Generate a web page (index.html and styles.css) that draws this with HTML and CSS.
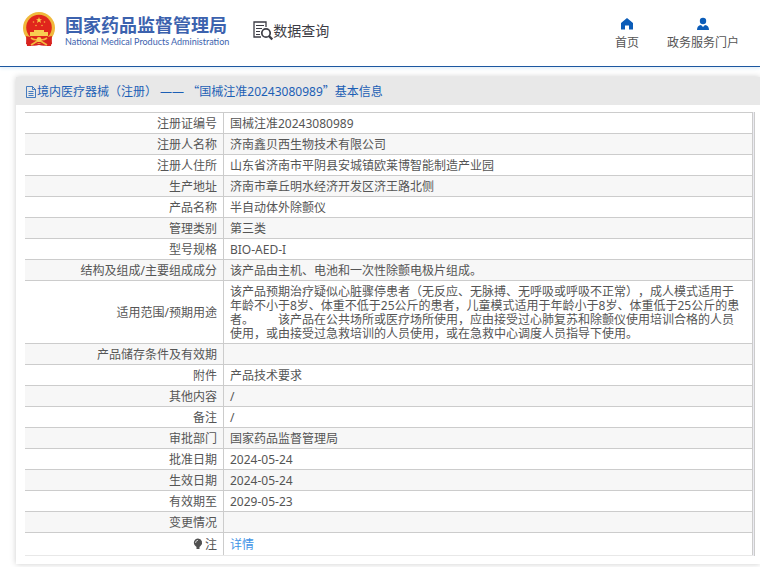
FILE: index.html
```html
<!DOCTYPE html>
<html lang="zh-CN">
<head>
    <meta charset="UTF-8">
    <meta name="viewport" content="width=device-width, initial-scale=1.0">
    <title>国家药品监督管理局 数据查询</title>
    <link rel="stylesheet" href="styles.css">
</head>
<body>
    <header class="header">
        <a class="logo" href="#">
            <svg class="emblem" viewBox="0 0 32 34" aria-hidden="true">
                <path d="M4 22 H28 L29 32 Q22 35 16 33 Q10 35 3 32 Z" fill="#d8231f"/>
                <circle cx="16" cy="16" r="16" fill="#f0b93c"/>
                <circle cx="16" cy="15.5" r="12.8" fill="#e0251c"/>
                <path d="M16 5 L16.8 7.2 L19 7.2 L17.3 8.6 L18 11 L16 9.5 L14 11 L14.7 8.6 L13 7.2 L15.2 7.2 Z" fill="#f9d24a"/>
                <g fill="#f9b03f">
                    <circle cx="10.5" cy="10" r="0.8"/>
                    <circle cx="21.5" cy="10" r="0.8"/>
                    <circle cx="13" cy="13.5" r="0.8"/>
                    <circle cx="19" cy="13.5" r="0.8"/>
                </g>
                <path d="M11 18 H21 V20 H25 V24 H7 V20 H11 Z" fill="#f8cd51"/>
                <path d="M3 24 L12 26 L16 28 L20 26 L29 24 L28 34 H24 L16 31 L8 34 H4 Z" fill="#d8231f"/>
                <path d="M8 26 Q12 29 16 27 Q20 29 24 26 M8 33 L16 28 L24 33" fill="none" stroke="#f3b93e" stroke-width="1.6"/>
                <circle cx="16" cy="27.5" r="2.4" fill="#f8cd51"/>
            </svg>
            <span class="logo-text">
                <span class="logo-cn">国家药品监督管理局</span>
                <span class="logo-en">National Medical Products Administration</span>
            </span>
        </a>
        <a class="search-title" href="#">
            <svg class="search-icon" viewBox="0 0 20 20" fill="none" stroke="#3d3d45" aria-hidden="true">
                <path d="M13 6 V1 H1 V16 H8" stroke-width="1.3"/>
                <path d="M3 4.5 H11 M3 7.5 H9 M3 10.5 H7 M3 13.5 H7"/>
                <circle cx="13" cy="12" r="4.2" stroke-width="1.7"/>
                <path d="M16 15 L19.3 18.5" stroke-width="2.4"/>
            </svg>
            <span>数据查询</span>
        </a>
        <nav class="nav">
            <a href="#">
                <svg viewBox="0 0 14 14" aria-hidden="true"><path d="M7 1 L13 6 V12.5 H9 V8.5 H5 V12.5 H1 V6 Z" fill="#0b5cb8"/></svg>
                <span>首页</span>
            </a>
            <a href="#">
                <svg viewBox="0 0 14 14" aria-hidden="true"><circle cx="7" cy="4" r="3.2" fill="#0b5cb8"/><path d="M1 13 Q1 8.5 5 8 L7 10 L9 8 Q13 8.5 13 13 Z" fill="#0b5cb8"/></svg>
                <span>政务服务门户</span>
            </a>
        </nav>
    </header>

    <main class="panel">
        <h1 class="panel-title">
            <svg class="doc-icon" viewBox="0 0 12 12" fill="none" stroke="#1c5fb5" stroke-width="0.8" aria-hidden="true">
                <path d="M1.5 0.5 H7.5 L10.5 3.5 V11.5 H1.5 Z M7.5 0.5 V3.5 H10.5 M3.5 5.5 H8.5 M3.5 7.5 H8.5 M3.5 9.5 H8.5"/>
            </svg>
            <span>境内医疗器械（注册） —— <span class="cjk">“</span>国械注准20243080989<span class="cjk">”</span>基本信息</span>
        </h1>
        <div class="table-box">
            <table class="info">
                <tr><th scope="row">注册证编号</th><td>国械注准20243080989</td></tr>
                <tr><th scope="row">注册人名称</th><td>济南鑫贝西生物技术有限公司</td></tr>
                <tr><th scope="row">注册人住所</th><td>山东省济南市平阴县安城镇欧莱博智能制造产业园</td></tr>
                <tr><th scope="row">生产地址</th><td>济南市章丘明水经济开发区济王路北侧</td></tr>
                <tr><th scope="row">产品名称</th><td>半自动体外除颤仪</td></tr>
                <tr><th scope="row">管理类别</th><td>第三类</td></tr>
                <tr><th scope="row">型号规格</th><td>BIO-AED-I</td></tr>
                <tr><th scope="row">结构及组成/主要组成成分</th><td>该产品由主机、电池和一次性除颤电极片组成。</td></tr>
                <tr><th scope="row">适用范围/预期用途</th><td>该产品预期治疗疑似心脏骤停患者（无反应、无脉搏、无呼吸或呼吸不正常），成人模式适用于年龄不小于8岁、体重不低于25公斤的患者，儿童模式适用于年龄小于8岁、体重低于25公斤的患者。&emsp;&emsp;该产品在公共场所或医疗场所使用，应由接受过心肺复苏和除颤仪使用培训合格的人员使用，或由接受过急救培训的人员使用，或在急救中心调度人员指导下使用。</td></tr>
                <tr><th scope="row">产品储存条件及有效期</th><td></td></tr>
                <tr><th scope="row">附件</th><td>产品技术要求</td></tr>
                <tr><th scope="row">其他内容</th><td>/</td></tr>
                <tr><th scope="row">备注</th><td>/</td></tr>
                <tr><th scope="row">审批部门</th><td>国家药品监督管理局</td></tr>
                <tr><th scope="row">批准日期</th><td>2024-05-24</td></tr>
                <tr><th scope="row">生效日期</th><td>2024-05-24</td></tr>
                <tr><th scope="row">有效期至</th><td>2029-05-23</td></tr>
                <tr><th scope="row">变更情况</th><td></td></tr>
                <tr class="note">
                    <th scope="row"><svg class="bulb" viewBox="0 0 10 12" aria-hidden="true"><path d="M5 0.5 A4.2 4.2 0 0 1 7.5 8 L6.5 9 V11 H3.5 V9 L2.5 8 A4.2 4.2 0 0 1 5 0.5 Z" fill="#505050"/><path d="M2.5 5 Q2.5 2.5 5 2.3" fill="none" stroke="#fff" stroke-width="0.7"/></svg>注</th>
                    <td><a href="#">详情</a></td>
                </tr>
            </table>
        </div>
    </main>
</body>
</html>
```
FILE: styles.css
```css
body {
    margin: 0;
    padding-bottom: 4px;
    font-family: "Noto Sans", "Noto Sans CJK SC", sans-serif;
    font-size: 12px;
    line-height: 14px;
    color: #555;
    background-color: #fff;
    overflow-x: hidden;
    text-spacing-trim: space-all;
}

a {
    color: inherit;
    text-decoration: none;
}

/* 頁首 */
.header {
    display: flex;
    align-items: center;
    height: 66px;
    padding: 0 21px 0 23px;
    border-bottom: 1px solid #1c57a0;
    box-shadow: 0 2px 3px #e6f0f8;
}

.logo {
    display: flex;
    align-items: center;
    gap: 10px;
    padding-bottom: 8px;
}

.emblem {
    width: 32px;
    height: 34px;
}

.logo-text {
    display: flex;
    flex-direction: column;
    padding-top: 3px;
    color: #3c62ae;
    white-space: nowrap;
}

.logo-cn {
    font-size: 18px;
    font-weight: bold;
    line-height: 22px;
}

.logo-en {
    font-family: Lato, "Liberation Sans", sans-serif;
    font-size: 9px;
    line-height: 12px;
}

.search-title {
    display: flex;
    align-items: center;
    margin-left: 24px;
    padding-bottom: 4px;
    font-size: 14px;
    color: #3d3d45;
}

.search-icon {
    width: 20px;
    height: 20px;
}

.nav {
    display: flex;
    gap: 28px;
    margin-left: auto;
}

.nav a {
    display: flex;
    flex-direction: column;
    align-items: center;
    gap: 5px;
}

.nav svg {
    width: 14px;
    height: 14px;
}

/* 內容 */
.panel {
    margin: 10px 0 0 16px;
    padding-bottom: 8px;
    box-shadow: 0 0 6px #ccc;
}

.panel-title {
    display: flex;
    align-items: center;
    box-sizing: border-box;
    height: 28px;
    margin: 0;
    padding: 1px 0 0 9px;
    font-size: 12px;
    line-height: 14px;
    font-weight: normal;
    color: #1c5fb5;
    background-color: #e8e8e8;
}

.cjk {
    font-family: "Noto Sans CJK SC", sans-serif;
}

.doc-icon {
    width: 12px;
    height: 12px;
}

.table-box {
    margin: 7px 5px 0 9px;
    padding-right: 1px;
    border-right: 1px solid #ccc;
    background-color: #ebebf2;
}

.info {
    width: 100%;
    border-collapse: collapse;
    border-top: 1px solid #ccc;
    border-right: 1px solid #ccc;
    background-color: #fff;
}

.info th,
.info td {
    height: 14px;
    padding: 4px 6px 2px;
    border-bottom: 1px solid #ccc;
}

.info th {
    width: 186px;
    font-weight: normal;
    text-align: right;
    border-right: 1px solid #ccc;
}

.info td {
    padding-right: 10px;
}

.info tr:nth-child(even) {
    background-color: #f7f7f7;
}

.info .note th,
.info .note td {
    padding: 5px 6px 3px;
    border-bottom-color: #e8e8e8;
}

.note a {
    color: #3f93e6;
}

.bulb {
    width: 10px;
    height: 12px;
    margin-right: 2px;
    vertical-align: -1px;
}
```
